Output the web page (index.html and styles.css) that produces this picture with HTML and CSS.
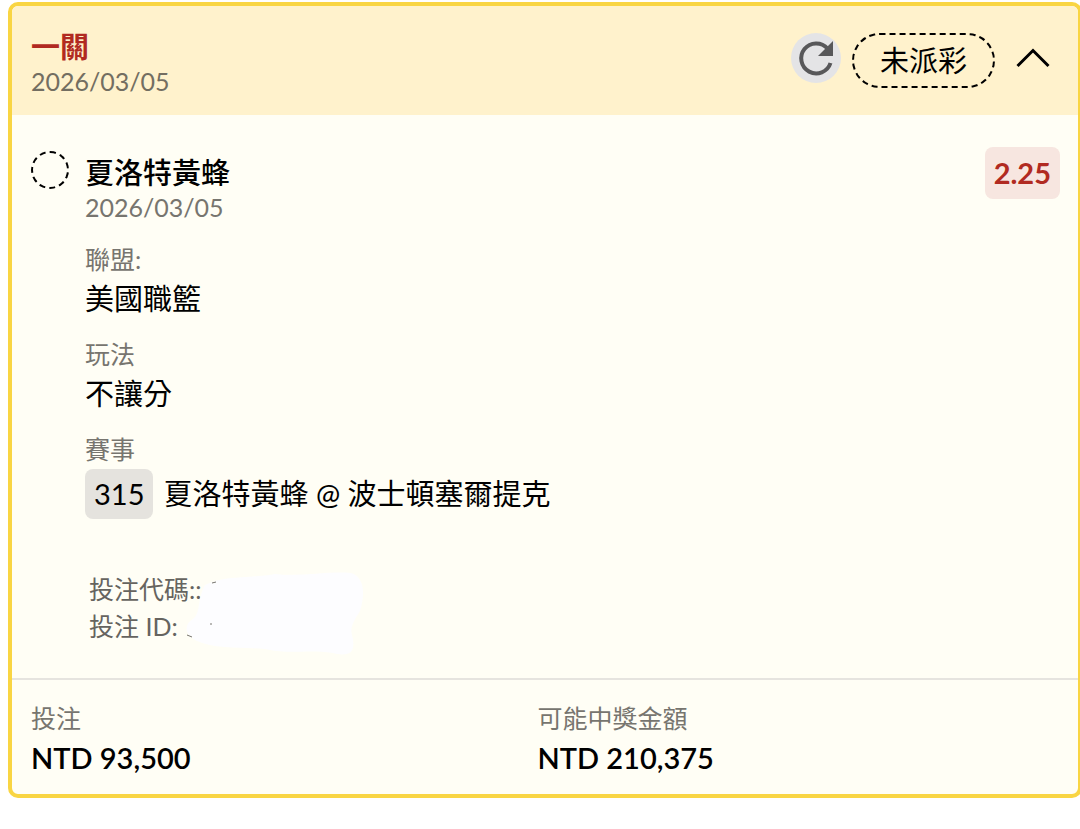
FILE: index.html
```html
<!DOCTYPE html>
<html lang="zh-Hant">
<head>
    <meta charset="UTF-8">
    <meta name="viewport" content="width=device-width, initial-scale=1.0">
    <title>投注紀錄</title>
    <link rel="stylesheet" href="styles.css">
</head>
<body>
    <article class="card">
        <header class="card-header">
            <div class="heading">
                <h1 class="type">一關</h1>
                <time class="date">2026/03/05</time>
            </div>
            <div class="actions">
                <button class="refresh" type="button" aria-label="重新整理">
                    <svg viewBox="0 0 50 50" width="50" height="50">
                        <path d="M36.5 15.5A15 15 0 1 0 39.5 30" fill="none" stroke="#58585a" stroke-width="4"/>
                        <path d="M42 8V23H27Z" fill="#58585a"/>
                    </svg>
                </button>
                <span class="status">未派彩</span>
                <button class="toggle" type="button" aria-label="收合">
                    <svg viewBox="0 0 34 20" width="34" height="20">
                        <path d="M1.5 18L17 2.5L32.5 18" fill="none" stroke="#000" stroke-width="3"/>
                    </svg>
                </button>
            </div>
        </header>

        <section class="bet">
            <span class="pending"></span>
            <div class="details">
                <h2 class="team">夏洛特黃蜂</h2>
                <time class="date">2026/03/05</time>
                <dl class="info">
                    <div class="item">
                        <dt>聯盟:</dt>
                        <dd>美國職籃</dd>
                    </div>
                    <div class="item">
                        <dt>玩法</dt>
                        <dd>不讓分</dd>
                    </div>
                    <div class="item">
                        <dt>賽事</dt>
                        <dd class="match"><span class="number">315</span>夏洛特黃蜂 @ 波士頓塞爾提克</dd>
                    </div>
                </dl>
                <div class="codes">
                    <p>投注代碼::</p>
                    <p>投注 ID:</p>
                    <svg class="smudge" viewBox="0 0 180 90" width="180" height="90">
                        <path d="M20 14C40 4 62 8 90 3C118 6 140 0 166 2C180 6 180 24 175 40C168 52 164 56 168 68C170 82 164 86 148 82C120 78 108 84 80 78C56 76 30 78 12 70C0 64-2 54 8 48C16 42 12 28 20 14Z" fill="#fdfdff"/>
                        <path d="M27 12l4-1M2 64l5 2M25 53l2 0" stroke="#77756e" stroke-width="1"/>
                    </svg>
                </div>
            </div>
            <strong class="odds">2.25</strong>
        </section>

        <footer class="totals">
            <div>
                <p class="label">投注</p>
                <p class="amount">NTD 93,500</p>
            </div>
            <div>
                <p class="label">可能中獎金額</p>
                <p class="amount">NTD 210,375</p>
            </div>
        </footer>
    </article>
</body>
</html>
```
FILE: styles.css
```css
* {
    box-sizing: border-box;
}

body {
    margin: 0;
    background-color: #fff;
    color: #000;
    font-family: Lato, "Noto Sans CJK TC", sans-serif;
    font-size: 29px;
    overflow-x: hidden;
}

h1, h2, p, dl, dd {
    margin: 0;
}

button {
    padding: 0;
    border: none;
    background: none;
    cursor: pointer;
}

svg {
    display: block;
}

.card {
    margin: 2px -2px 0 8px;
    border: 4px solid #f9d543;
    border-radius: 10px;
    background-color: #fffef5;
    overflow: hidden;
}

.card-header {
    display: flex;
    justify-content: space-between;
    align-items: flex-start;
    padding: 23px 28px 16px 19px;
    background-color: #fff2cc;
}

.type {
    color: #b12a21;
    font-size: 29px;
    font-weight: 700;
    line-height: 35px;
}

.date {
    display: block;
    color: #736e61;
    font-size: 25px;
    line-height: 35px;
}

.actions {
    display: flex;
    align-items: flex-start;
    gap: 11px;
    margin-top: 4px;
}

.refresh {
    border-radius: 50%;
    background-color: #e4e4e6;
}

.status {
    padding: 0 26px;
    border: 2px dashed #000;
    border-radius: 28px;
    line-height: 51px;
}

.toggle {
    height: 50px;
    margin-left: 10px;
}

.bet {
    display: flex;
    align-items: flex-start;
    padding: 32px 18px 32px 19px;
}

.pending {
    width: 38px;
    height: 38px;
    margin-top: 4px;
    border: 2px dashed #000;
    border-radius: 50%;
}

.details {
    flex: 1;
    margin-left: 16px;
    padding-top: 8px;
}

.team {
    font-size: 29px;
    font-weight: 500;
    line-height: 35px;
}

.bet .date {
    color: #77756f;
}

.info {
    display: grid;
    gap: 16px;
    margin-top: 14px;
}

.info dt {
    color: #77756f;
    font-size: 25px;
    line-height: 40px;
}

.info dd {
    line-height: 39px;
}

.info .match {
    display: flex;
    align-items: center;
    gap: 10px;
    line-height: 50px;
}

.number {
    padding: 0 9px;
    border-radius: 8px;
    background-color: #e5e3de;
}

.codes {
    position: relative;
    margin: 52px 0 1px 4px;
    color: #66645f;
    font-size: 25px;
    line-height: 37px;
}

.smudge {
    position: absolute;
    top: 0;
    left: 96px;
}

.odds {
    padding: 0 9px;
    border-radius: 8px;
    background-color: #f7e6e0;
    color: #b12a21;
    line-height: 52px;
}

.totals {
    display: grid;
    grid-template-columns: 1fr 1fr;
    padding: 18px 34px 16px 19px;
    border-top: 2px solid #e6e4df;
}

.label {
    color: #77756f;
    font-size: 25px;
    line-height: 40px;
}

.amount {
    font-weight: 600;
    line-height: 40px;
}
```
